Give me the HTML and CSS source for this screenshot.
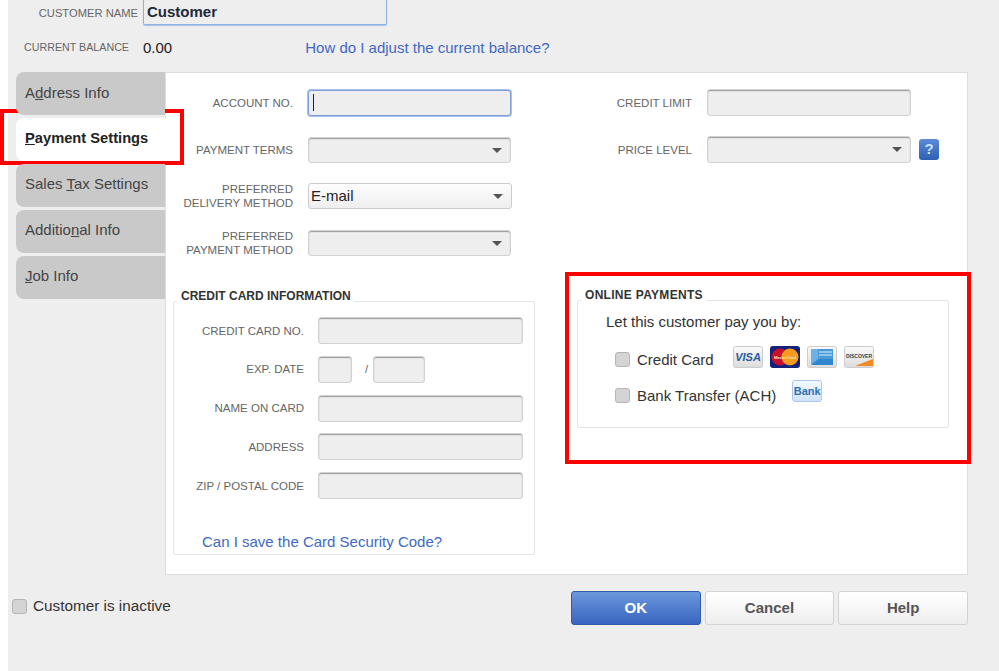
FILE: index.html
```html
<!DOCTYPE html>
<html lang="en">
<head>
  <meta charset="UTF-8" />
  <title>Customer - Payment Settings</title>
  <link rel="stylesheet" href="styles.css">
</head>
<body>
  <div class="dialog">
    <div class="name-row">
      <label class="head-label">CUSTOMER NAME</label>
      <div class="name-input">Customer</div>
    </div>
    <div class="balance-row">
      <span class="head-label balance-label">CURRENT BALANCE</span>
      <span class="balance">0.00</span>
      <a class="link balance-link" href="#">How do I adjust the current balance?</a>
    </div>

    <div class="tabs-wrap">
      <div class="tabs">
        <div class="tab">A<u>d</u>dress Info</div>
        <div class="tab active"><u>P</u>ayment Settings</div>
        <div class="tab">Sales <u>T</u>ax Settings</div>
        <div class="tab">Additio<u>n</u>al Info</div>
        <div class="tab"><u>J</u>ob Info</div>
      </div>

      <div class="panel">
        <div class="col">
          <div class="rows">
            <div class="row">
              <span class="lbl">ACCOUNT NO.</span>
              <div class="field focus"><span class="caret"></span></div>
            </div>
            <div class="row">
              <span class="lbl">PAYMENT TERMS</span>
              <div class="field select"></div>
            </div>
            <div class="row">
              <span class="lbl">PREFERRED<br>DELIVERY METHOD</span>
              <div class="field select on">E-mail</div>
            </div>
            <div class="row">
              <span class="lbl">PREFERRED<br>PAYMENT METHOD</span>
              <div class="field select"></div>
            </div>
          </div>

          <fieldset class="group card-group">
            <legend>CREDIT CARD INFORMATION</legend>
            <div class="card-rows">
              <div class="row">
                <span class="lbl">CREDIT CARD NO.</span>
                <div class="field"></div>
              </div>
              <div class="row">
                <span class="lbl">EXP. DATE</span>
                <div class="field exp-m"></div>
                <span class="slash">/</span>
                <div class="field exp-y"></div>
              </div>
              <div class="row">
                <span class="lbl">NAME ON CARD</span>
                <div class="field"></div>
              </div>
              <div class="row">
                <span class="lbl">ADDRESS</span>
                <div class="field"></div>
              </div>
              <div class="row">
                <span class="lbl">ZIP / POSTAL CODE</span>
                <div class="field"></div>
              </div>
            </div>
            <a class="link cvv-link" href="#">Can I save the Card Security Code?</a>
          </fieldset>
        </div>

        <div class="col right">
          <div class="rows">
            <div class="row">
              <span class="lbl">CREDIT LIMIT</span>
              <div class="field"></div>
            </div>
            <div class="row">
              <span class="lbl">PRICE LEVEL</span>
              <div class="field select"></div>
              <span class="help-icon">?</span>
            </div>
          </div>

          <fieldset class="group online-group">
            <legend>ONLINE PAYMENTS</legend>
            <p class="pay-by">Let this customer pay you by:</p>
            <div class="pay-row">
              <span class="check"></span>
              <span>Credit Card</span>
              <div class="cards">
                <svg class="pay-icon" viewBox="0 0 30 22">
                  <defs>
                    <linearGradient id="cardBg" x1="0" y1="0" x2="0" y2="1">
                      <stop offset="0" stop-color="#fafafa"/>
                      <stop offset="1" stop-color="#dcdcdc"/>
                    </linearGradient>
                  </defs>
                  <rect x="0.5" y="0.5" width="29" height="21" rx="2" fill="url(#cardBg)" stroke="#ccc"/>
                  <text x="15" y="15" class="visa-text">VISA</text>
                </svg>
                <svg class="pay-icon" viewBox="0 0 30 22">
                  <rect x="0" y="0" width="30" height="22" rx="3" fill="#14217a"/>
                  <circle cx="10" cy="11" r="8.5" fill="#c8102e"/>
                  <circle cx="20" cy="11" r="8.5" fill="#f39c1f"/>
                  <text x="15" y="13" class="mc-text">MasterCard</text>
                </svg>
                <svg class="pay-icon" viewBox="0 0 30 22">
                  <rect x="0.5" y="0.5" width="29" height="21" rx="2" fill="url(#cardBg)" stroke="#ccc"/>
                  <rect x="4" y="3" width="22" height="15" fill="#4a9ad8"/>
                  <path d="M4 19 L12 13 H26 V19 Z" fill="#2f86cf"/>
                  <path d="M4 18 L11 13 V3 H4 Z" fill="#6db2e6"/>
                  <path d="M12 6 H25 M12 9 H25" stroke="#a9d3f0" stroke-width="1.4"/>
                </svg>
                <svg class="pay-icon" viewBox="0 0 30 22">
                  <rect x="0.5" y="0.5" width="29" height="21" rx="2" fill="url(#cardBg)" stroke="#ccc"/>
                  <path d="M11 20 L29 13 V20 Z" fill="#f08a24"/>
                  <text x="15" y="12" class="disc-text">DISCOVER</text>
                </svg>
              </div>
            </div>
            <div class="pay-row">
              <span class="check"></span>
              <span>Bank Transfer (ACH)</span>
              <div class="bank-icon">Bank</div>
            </div>
          </fieldset>
        </div>
      </div>
    </div>

    <div class="footer">
      <div class="inactive">
        <span class="check"></span>
        <span>Customer is inactive</span>
      </div>
      <div class="buttons">
        <button class="btn primary">OK</button>
        <button class="btn">Cancel</button>
        <button class="btn">Help</button>
      </div>
    </div>
  </div>

  <!-- red annotation boxes drawn on top of the screenshot -->
  <div class="mark mark-tab"></div>
  <div class="mark mark-online"></div>
</body>
</html>
```

FILE: styles.css
```css
* {
  margin: 0;
  padding: 0;
  box-sizing: border-box;
}

body, html {
  width: 100%;
  height: 100%;
  overflow: hidden;
  background-color: #fff;
  font-family: "Liberation Sans", Arial, sans-serif;
}

body {
  position: relative;
}

.dialog {
  margin-left: 8px;
  height: 671px;
  background-color: #eee;
  padding-right: 31px;
  color: #333;
}

/* header */
.name-row {
  display: flex;
  align-items: center;
  gap: 5px;
  height: 25px;
}

.head-label {
  width: 130px;
  text-align: right;
  font-size: 11.2px;
  color: #666;
}

.name-input {
  width: 244px;
  height: 26px;
  margin-top: -1px;
  padding-left: 3px;
  line-height: 24px;
  font-size: 15px;
  font-weight: bold;
  color: #1d2a3a;
  border: 1px solid #8fb0e0;
  border-top-color: #c5d3e8;
  border-radius: 2px;
  box-shadow: 0 1px 1px #a9c1e8;
}

.balance-row {
  display: flex;
  align-items: center;
  height: 18px;
  margin-top: 13px;
}

.balance-label {
  width: 121px;
  font-size: 10.7px;
}

.balance {
  margin-left: 14px;
  font-size: 15px;
  color: #222;
}

.balance-link {
  margin-left: 133px;
  font-size: 15.3px;
}

.link {
  font-size: 15px;
  color: #4169c3;
  text-decoration: none;
}

/* tabs + panel */
.tabs-wrap {
  display: flex;
  margin-top: 16px;
  padding-left: 8px;
}

.tabs {
  width: 149px;
  display: flex;
  flex-direction: column;
  gap: 3px;
  position: relative;
  z-index: 1;
}

.tab {
  height: 43px;
  padding-left: 9px;
  line-height: 40px;
  font-size: 15px;
  color: #444;
  background-color: #c9c9c9;
  border-radius: 8px 0 0 8px;
}

.tab:first-child {
  line-height: 42px;
}

.tab.active {
  margin-right: -1px;
  line-height: 41px;
  font-size: 14.7px;
  font-weight: bold;
  color: #222;
  background-color: #fff;
}

.panel {
  flex: 1;
  height: 503px;
  display: grid;
  grid-template-columns: 362px 372px;
  column-gap: 42px;
  padding: 17px 0 0 7px;
  background-color: #fff;
  border: 1px solid #ddd;
}

.rows {
  display: flex;
  flex-direction: column;
  gap: 20.5px;
}

.row {
  display: flex;
  align-items: center;
  height: 26px;
}

.lbl {
  width: 120px;
  margin-right: 15px;
  text-align: right;
  font-size: 11.5px;
  line-height: 14px;
  color: #666;
  flex-shrink: 0;
}

.field {
  position: relative;
  width: 203px;
  height: 100%;
  padding-left: 2px;
  line-height: 24px;
  font-size: 15px;
  color: #222;
  background-color: #eee;
  border: 1px solid #d2d2d2;
  border-radius: 3px;
  box-shadow: inset 0 1px 1px #999;
}

.field.focus {
  border: 1px solid #7c9fdc;
  box-shadow: 0 0 0 1px #a9c1e8;
}

.caret {
  display: block;
  width: 1px;
  height: 17px;
  margin-top: 3px;
  margin-left: 2px;
  background-color: #222;
}

.field.on {
  width: 204px;
  background: linear-gradient(#fdfdfd, #eee);
  border-color: #ccc;
  box-shadow: none;
}

.select::after {
  content: "";
  position: absolute;
  right: 8px;
  top: 10px;
  border-left: 5px solid transparent;
  border-right: 5px solid transparent;
  border-top: 5px solid #555;
}

.right .rows {
  margin-top: -1px;
  gap: 20px;
}

.right .row {
  height: 27px;
}

.right .lbl {
  width: 115px;
}

.right .field {
  width: 204px;
}

.help-icon {
  width: 20px;
  height: 21px;
  margin-left: 8px;
  text-align: center;
  font-size: 15px;
  font-weight: bold;
  line-height: 20px;
  color: #cfe0f8;
  background: linear-gradient(#5a8cd8, #2d5fb4);
  border-radius: 3px;
}

/* fieldsets */
.group {
  border: 1px solid #e4e4e4;
  border-radius: 2px;
}

.group legend {
  margin-left: 3px;
  padding: 0 4px 10px;
  font-size: 12px;
  font-weight: bold;
  line-height: 14px;
  color: #333;
}

.card-group {
  height: 266px;
  margin-top: 33.5px;
}

.card-group .row {
  height: 27px;
}

.card-group .lbl {
  width: 130px;
  margin-right: 14px;
}

.card-group .field {
  width: 205px;
}

.card-rows {
  display: flex;
  flex-direction: column;
  gap: 11.75px;
  padding-top: 4px;
}

.card-group .exp-m {
  width: 34px;
}

.slash {
  width: 21px;
  padding-left: 8px;
  text-align: center;
  font-size: 11px;
  color: #666;
}

.card-group .exp-y {
  width: 52px;
}

.cvv-link {
  display: block;
  margin: 34px 0 0 28px;
  line-height: 18px;
}

.online-group {
  height: 140px;
  margin-top: 125px;
  padding-top: 1px;
  font-size: 15px;
  color: #333;
}

.online-group legend {
  letter-spacing: 0.3px;
}

.pay-by {
  margin-left: 28px;
  line-height: 18px;
}

.pay-row {
  display: flex;
  align-items: center;
  margin: 17px 0 0 37px;
  height: 22px;
}

.pay-row + .pay-row {
  margin-top: 14px;
}

.check {
  width: 15px;
  height: 15px;
  margin-right: 7px;
  background-color: #d4d4d4;
  border: 1px solid #b5b5b5;
  border-radius: 3px;
  flex-shrink: 0;
}

.cards {
  display: flex;
  gap: 7px;
  margin: -4px 0 0 19px;
}

.pay-icon {
  display: block;
  width: 30px;
  height: 22px;
}

.visa-text {
  font: italic bold 11px "Liberation Sans", sans-serif;
  text-anchor: middle;
  fill: #2a5a9c;
}

.mc-text {
  font: bold 4px "Liberation Sans", sans-serif;
  text-anchor: middle;
  fill: #fbe3b0;
}

.disc-text {
  font: bold 5px "Liberation Sans", sans-serif;
  text-anchor: middle;
  fill: #444;
}

.bank-icon {
  width: 30px;
  height: 22px;
  margin: -8px 0 0 16px;
  text-align: center;
  font-size: 11px;
  font-weight: bold;
  line-height: 20px;
  color: #2a6fb0;
  background: linear-gradient(#f4f9ff, #cfe2f8);
  border: 1px solid #a9c8ec;
  border-radius: 3px;
}

/* footer */
.footer {
  display: flex;
  justify-content: space-between;
  align-items: flex-start;
  margin-top: 16px;
}

.inactive {
  display: flex;
  align-items: center;
  margin: 6px 0 0 4px;
  font-size: 15.3px;
  color: #333;
}

.inactive .check {
  margin-right: 6px;
}

.buttons {
  display: flex;
  gap: 4px;
}

.btn {
  width: 129.7px;
  height: 34px;
  padding-bottom: 2px;
  font: bold 15px "Liberation Sans", sans-serif;
  color: #555;
  background: linear-gradient(#fff, #eee);
  border: 1px solid #d2d2d2;
  border-radius: 3px;
}

.btn.primary {
  color: #fff;
  background: linear-gradient(#6b98dc, #3a65c0);
  border-color: #2f5cab;
}

/* annotation */
.mark {
  position: absolute;
  border: 4px solid #f00;
}

.mark-tab {
  left: 0;
  top: 109px;
  width: 184px;
  height: 56px;
}

.mark-online {
  left: 565px;
  top: 272px;
  width: 406px;
  height: 192px;
}
```
